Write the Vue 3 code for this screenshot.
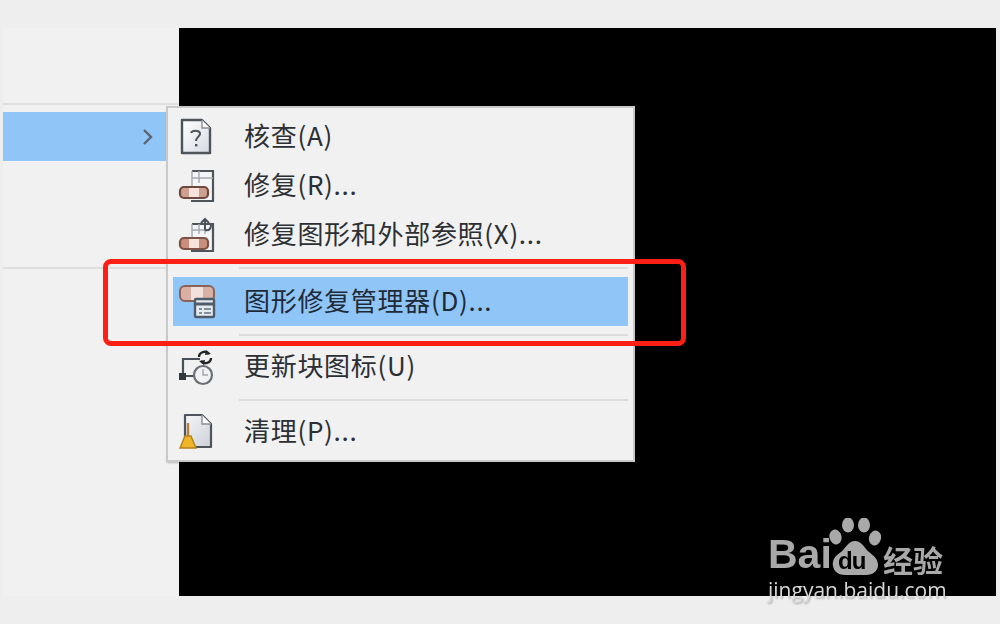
<template>
  <div class="page">
    <div class="shot">
      <aside class="side">
        <div class="side-top"></div>
        <div class="side-row">
          <svg class="chev" width="14" height="18" viewBox="0 0 14 18">
            <path d="M3 2l7 7-7 7" fill="none" stroke="#5b6470" stroke-width="2.4" />
          </svg>
        </div>
        <div class="side-gap"></div>
      </aside>
      <main class="canvas"></main>

      <div class="menu">
        <template v-for="item in items" :key="item.label">
          <div class="row" :class="{ active: item.active }">
            <span class="ico">
              <svg v-if="item.icon === 'check'" width="36" height="40" viewBox="0 0 36 40">
                <defs>
                  <linearGradient id="paper" x1="0" y1="0" x2="1" y2="1">
                    <stop offset="0" stop-color="#ffffff" />
                    <stop offset="1" stop-color="#d6dbe2" />
                  </linearGradient>
                </defs>
                <path d="M4 3h20l8 8v25H4z" fill="url(#paper)" stroke="#4d545c" stroke-width="2.4" stroke-linejoin="round" />
                <path d="M24 3v8h8" fill="#fff" stroke="#8a9097" stroke-width="1.4" />
                <path d="M13 16c1-3 8-3 9 0 1 3-4 4-4 8" fill="none" stroke="#4d545c" stroke-width="2" />
                <rect x="17" y="27" width="2.400" height="2.400" fill="#4d545c" />
              </svg>

              <svg v-else-if="item.icon === 'repair'" width="38" height="36" viewBox="0 0 38 36">
                <path d="M14 3h21v30H13" fill="#f4f5f6" stroke="#4d545c" stroke-width="2.2" />
                <path d="M14 3v16M14 10h21M21 3v12" fill="none" stroke="#a4a9af" stroke-width="1.4" />
                <rect x="2" y="19" width="28" height="11" rx="4" fill="#cf9f90" stroke="#6f483e" stroke-width="2.2" />
                <rect x="11" y="20" width="10" height="9" fill="#f5e3dc" />
              </svg>

              <svg v-else-if="item.icon === 'xref'" width="38" height="38" viewBox="0 0 38 38">
                <path d="M14 8h21v27H13" fill="#f4f5f6" stroke="#4d545c" stroke-width="2.2" />
                <path d="M14 8v14M14 14h16M21 8v10M27 8v10" fill="none" stroke="#a4a9af" stroke-width="1.4" />
                <path d="M27 14V3M23 7l4-4 4 4M27 14c4 1 6-1 6-5" fill="none" stroke="#4b5158" stroke-width="2" />
                <rect x="2" y="22" width="28" height="11" rx="4" fill="#c98e7c" stroke="#7d5247" stroke-width="2.2" />
                <rect x="11" y="23" width="10" height="9" fill="#f5e3dc" />
              </svg>

              <svg v-else-if="item.icon === 'manager'" width="38" height="36" viewBox="0 0 38 36">
                <rect x="2" y="2" width="34" height="15" rx="5" fill="#d9b0a4" stroke="#8c6256" stroke-width="2" />
                <rect x="13" y="3" width="12" height="13" fill="#f2e0da" />
                <rect x="17" y="15" width="19" height="18" rx="1" fill="#e6ebf0" stroke="#4e5c6a" stroke-width="2.4" />
                <path d="M17 20h19" stroke="#4e5c6a" stroke-width="3" />
                <path d="M21 25h3M26 25h7M21 29h3M26 29h7" stroke="#65717d" stroke-width="1.6" />
              </svg>

              <svg v-else-if="item.icon === 'block'" width="38" height="38" viewBox="0 0 38 38">
                <path d="M5 28V11h17M6 28h14" fill="none" stroke="#4b5158" stroke-width="2.2" />
                <rect x="1" y="25" width="7" height="7" fill="#33383d" />
                <circle cx="25" cy="27" r="9" fill="#f1f2f3" stroke="#6a7076" stroke-width="2.2" />
                <path d="M25 21v6h5" fill="none" stroke="#a0a5aa" stroke-width="1.4" />
                <path d="M21 9c0-5 7-7 10-3M33 10c0 5-7 7-10 3" fill="none" stroke="#25282b" stroke-width="2.4" />
                <path d="M28 2l5 4-6 1zM26 17l-5-4 6-1z" fill="#25282b" />
              </svg>

              <svg v-else width="36" height="38" viewBox="0 0 36 38">
                <defs>
                  <linearGradient id="sheet" x1="0" y1="0" x2="1" y2="1">
                    <stop offset="0" stop-color="#f4f5f7" />
                    <stop offset="1" stop-color="#ccd1d9" />
                  </linearGradient>
                </defs>
                <path d="M7 26V2h17l9 9v23H16" fill="url(#sheet)" stroke="#4d545c" stroke-width="2.2" stroke-linejoin="round" />
                <path d="M24 2v9h9" fill="#fff" stroke="#8a9097" stroke-width="1.4" />
                <path d="M10 10v14" stroke="#b5803a" stroke-width="2.4" />
                <path d="M7 23h6l5 12H2z" fill="#f0b429" stroke="#b5801e" stroke-width="1.4" />
              </svg>
            </span>
            <span class="label">{{ item.label }}</span>
          </div>
          <div v-if="item.sep" class="sep"></div>
        </template>
      </div>

      <div class="redbox"></div>

      <div class="mark">
        <div class="logo">
          <span class="bai">Bai</span>
          <span class="paw">
            <svg width="52" height="58" viewBox="0 0 52 58">
              <ellipse cx="19" cy="7" rx="6" ry="7.5" fill="#a9a9a9" />
              <ellipse cx="35" cy="7" rx="6" ry="7.5" fill="#a9a9a9" />
              <ellipse cx="6.500" cy="19" rx="6" ry="7.5" fill="#a9a9a9" transform="rotate(-15 6.500 19)" />
              <ellipse cx="46" cy="20" rx="6" ry="7.500" fill="#a9a9a9" transform="rotate(15 46 20)" />
              <path d="M26 23c-7 0-9 7-14 11-6 4-9 8-8 14 1 6 6 9 12 9h21c7 0 12-4 12-10 0-6-4-9-9-13-5-4-7-11-14-11z" fill="#a9a9a9" />
            </svg>
            <span class="du">du</span>
          </span>
          <span class="jy">经验</span>
        </div>
        <div class="url">jingyan.baidu.com</div>
      </div>
    </div>
  </div>
</template>

<script setup>
const items = [
  { label: '核查(A)', icon: 'check' },
  { label: '修复(R)...', icon: 'repair' },
  { label: '修复图形和外部参照(X)...', icon: 'xref', sep: true },
  { label: '图形修复管理器(D)...', icon: 'manager', active: true, sep: true },
  { label: '更新块图标(U)', icon: 'block', sep: true },
  { label: '清理(P)...', icon: 'purge' }
]
</script>

<style>
body {
  margin: 0;
  background: #eeeeee;
}
</style>

<style scoped>
.page {
  width: 1000px;
  height: 624px;
  padding: 28px 4px 28px 3px;
  box-sizing: border-box;
  background: #eeeeee;
  overflow: hidden;
  font-family: "Noto Sans CJK SC", "Noto Sans", sans-serif;
}

.shot {
  position: relative;
  display: flex;
  height: 100%;
  filter: blur(0.6px);
}

.side {
  width: 176px;
  background: #f1f1f1;
  display: flex;
  flex-direction: column;
}

.side-top {
  height: 77px;
  border-bottom: 2px solid #dedede;
  box-sizing: border-box;
}

.side-row {
  height: 49px;
  margin-top: 7px;
  width: 163px;
  background: #8fc6f7;
  display: flex;
  align-items: center;
  justify-content: flex-end;
  padding-right: 11px;
  box-sizing: border-box;
}

.side-gap {
  height: 108px;
  border-bottom: 2px solid #dedede;
  box-sizing: border-box;
}

.canvas {
  flex: 1;
  background: #000000;
}

.menu {
  position: absolute;
  left: 163px;
  top: 78px;
  width: 469px;
  height: 356px;
  box-sizing: border-box;
  padding: 4px 5px;
  background: #f1f1f1;
  border: 2px solid #c9c9c9;
  box-shadow: 1px 1px 2px rgba(0, 0, 0, 0.25);
  display: flex;
  flex-direction: column;
}

.row {
  height: 49px;
  flex: none;
  display: flex;
  align-items: center;
  color: #2c2f33;
}

.row.active {
  margin-top: 2px;
  background: #8fc6f7;
  color: #1f2a36;
}

.ico {
  width: 71px;
  padding-left: 5px;
  box-sizing: border-box;
  display: flex;
  align-items: center;
  flex: none;
}

.label {
  font-size: 26px;
  line-height: 32px;
  padding-bottom: 4px;
  white-space: nowrap;
  letter-spacing: 0.7px;
}

.sep {
  height: 2px;
  flex: none;
  margin: 8px 0 6px 66px;
  background: #dcdcdc;
}

.redbox {
  position: absolute;
  left: 100px;
  top: 231px;
  width: 583px;
  height: 87px;
  box-sizing: border-box;
  border: 5px solid #ff1f14;
  border-radius: 8px;
}

.mark {
  position: absolute;
  left: 765px;
  top: 489px;
  color: #a9a9a9;
}

.logo {
  display: flex;
  align-items: flex-end;
  height: 59px;
}

.bai {
  font-family: "Liberation Sans", sans-serif;
  font-weight: 700;
  font-size: 41px;
  line-height: 42px;
  width: 61px;
  margin-bottom: 1px;
}

.paw {
  position: relative;
  width: 52px;
  height: 58px;
  flex: none;
}

.du {
  position: absolute;
  left: 9px;
  bottom: 2px;
  font-family: "Liberation Sans", sans-serif;
  font-weight: 700;
  font-size: 24px;
  line-height: 26px;
  color: #000000;
  letter-spacing: -1px;
}

.jy {
  font-size: 30px;
  line-height: 30px;
  margin-left: 2px;
  margin-bottom: 2px;
  font-weight: 700;
}

.url {
  font-family: "Open Sans", sans-serif;
  font-size: 21px;
  line-height: 24px;
  margin-top: 2px;
  color: #d8d8d8;
  text-shadow: 1px 1px 2px rgba(0, 0, 0, 0.3);
  white-space: nowrap;
}
</style>
